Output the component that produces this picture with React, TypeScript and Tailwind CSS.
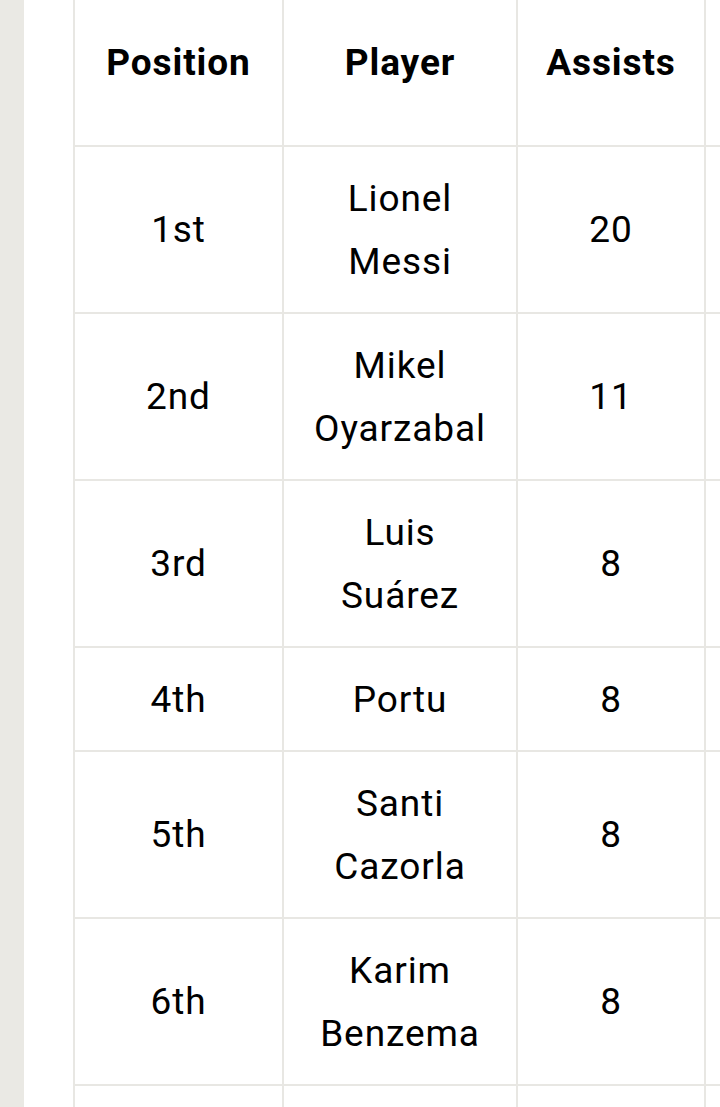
const rows = [
  { pos: "1st", player: ["Lionel", "Messi"], assists: "20" },
  { pos: "2nd", player: ["Mikel", "Oyarzabal"], assists: "11" },
  { pos: "3rd", player: ["Luis", "Suárez"], assists: "8" },
  { pos: "4th", player: ["Portu"], assists: "8" },
  { pos: "5th", player: ["Santi", "Cazorla"], assists: "8" },
  { pos: "6th", player: ["Karim", "Benzema"], assists: "8" },
];

export default function App() {
  return (
    <div className="flex h-screen w-full overflow-hidden bg-white font-['Roboto',sans-serif] text-black">
      {/* left rail */}
      <div className="w-[24px] shrink-0 bg-[#eae9e4]" />

      <div className="flex-1 overflow-hidden pl-[49px]">
        <table className="mt-[-22px] w-[833px] table-fixed border-collapse text-center text-[37px] leading-[63px] tracking-[0.9px]">
          <colgroup>
            <col className="w-[209px]" />
            <col className="w-[234px]" />
            <col className="w-[188px]" />
            <col className="w-[202px]" />
          </colgroup>
          <thead>
            <tr>
              <th className="h-[167px] border-2 border-[#e8e7e3] px-4 font-bold">Position</th>
              <th className="h-[167px] border-2 border-[#e8e7e3] px-4 font-bold">Player</th>
              <th className="h-[167px] border-2 border-[#e8e7e3] px-4 font-bold">Assists</th>
              <th className="h-[167px] border-2 border-[#e8e7e3] px-4 font-bold" />
            </tr>
          </thead>
          <tbody>
            {rows.map((r) => (
              <tr key={r.pos}>
                <td className="border-2 border-[#e8e7e3] px-4 py-[19.5px]">{r.pos}</td>
                <td className="border-2 border-[#e8e7e3] px-4 py-[19.5px]">
                  {r.player.map((line) => (
                    <div key={line}>{line}</div>
                  ))}
                </td>
                <td className="border-2 border-[#e8e7e3] px-4 py-[19.5px]">{r.assists}</td>
                <td className="border-2 border-[#e8e7e3] px-4 py-[19.5px]" />
              </tr>
            ))}
            {/* next row, scrolled below the fold */}
            <tr className="h-[104px]">
              <td className="border-2 border-[#e8e7e3]" />
              <td className="border-2 border-[#e8e7e3]" />
              <td className="border-2 border-[#e8e7e3]" />
              <td className="border-2 border-[#e8e7e3]" />
            </tr>
          </tbody>
        </table>
      </div>
    </div>
  );
}
